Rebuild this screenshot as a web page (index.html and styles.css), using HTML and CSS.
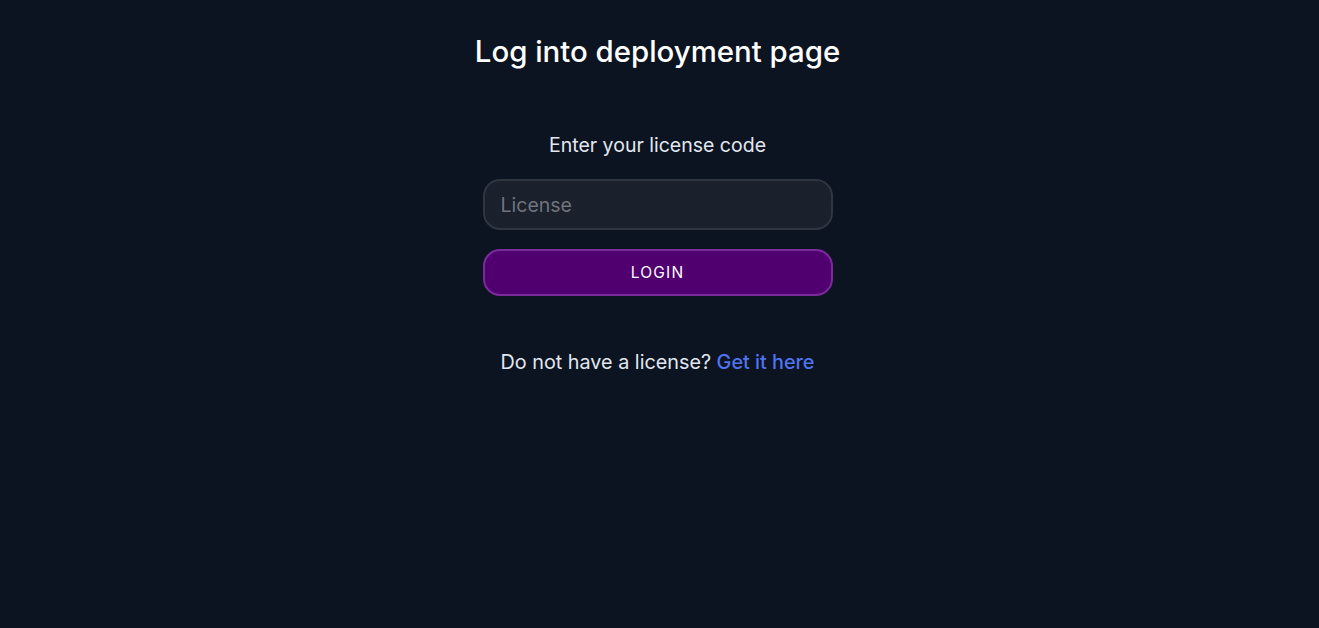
FILE: index.html
```html
<!DOCTYPE html>
<html lang="en">
<head>
<meta charset="utf-8">
<title>Log into deployment page</title>
<link rel="stylesheet" href="styles.css">
</head>
<body>
<main class="page">
  <h1 class="title">Log into deployment page</h1>
  <form class="form">
    <label class="label" for="license">Enter your license code</label>
    <input class="input" id="license" type="text" placeholder="License">
    <button class="button" type="button">LOGIN</button>
  </form>
  <p class="footer">Do not have a license? <a class="link" href="#">Get it here</a></p>
</main>
</body>
</html>
```
FILE: styles.css
```css
html, body {
  margin: 0;
  padding: 0;
  background: #0c1321;
  height: 100%;
}
body {
  font-family: Inter, "Noto Sans", sans-serif;
  color: #e5e7eb;
}
.page {
  display: flex;
  flex-direction: column;
  align-items: center;
  padding-top: 33px;
  padding-right: 4px;
}
.title {
  margin: 0;
  font-size: 29.4px;
  font-weight: 500;
  line-height: 38px;
  color: #ffffff;
}
.form {
  display: flex;
  flex-direction: column;
  align-items: center;
  width: 350px;
  margin-top: 60px;
}
.label {
  font-size: 19.5px;
  line-height: 28px;
  color: #e2e8f0;
}
.input {
  box-sizing: border-box;
  width: 350px;
  height: 51px;
  margin-top: 20px;
  padding: 0 16px;
  border: 2px solid #30363f;
  border-radius: 17px;
  background: #1a202c;
  color: #e5e7eb;
  font-family: inherit;
  font-size: 19.5px;
  outline: none;
}
.input::placeholder {
  color: #70747c;
}
.button {
  box-sizing: border-box;
  width: 350px;
  height: 47px;
  margin-top: 19px;
  border: 2px solid #7b2a9c;
  border-radius: 17px;
  background: #50006f;
  color: #ffffff;
  font-family: inherit;
  font-size: 15.5px;
  font-weight: 400;
  letter-spacing: 1.2px;
  cursor: pointer;
}
.footer {
  margin: 52px 0 0;
  font-size: 19.8px;
  line-height: 28px;
  color: #e2e8f0;
}
.link {
  color: #4f74f0;
  text-decoration: none;
  font-weight: 500;
}
```
